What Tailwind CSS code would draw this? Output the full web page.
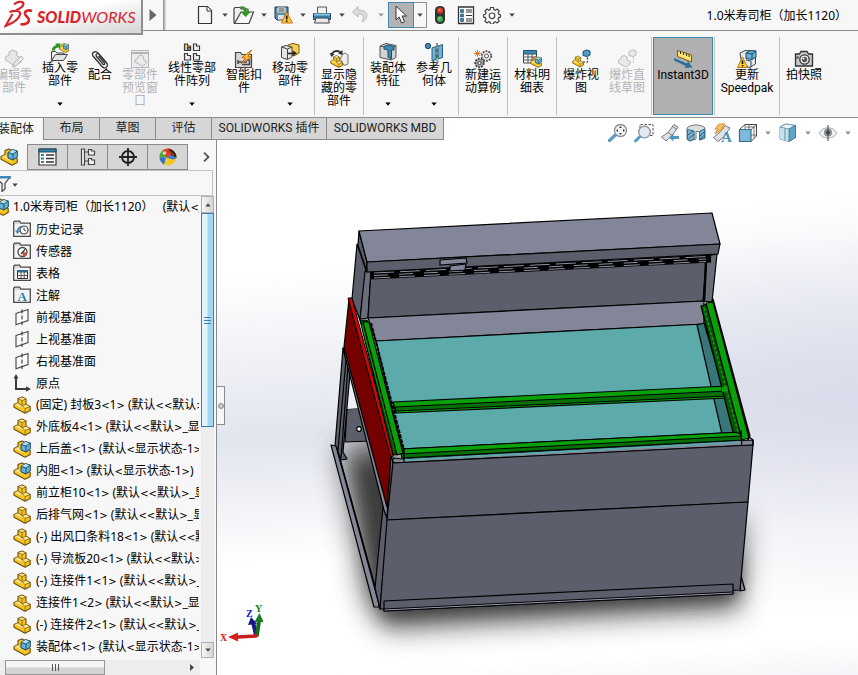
<!DOCTYPE html>
<html lang="zh-CN">
<head>
<meta charset="utf-8">
<title>SOLIDWORKS - 1.0米寿司柜（加长1120）</title>
<script src="https://cdn.jsdelivr.net/npm/@tailwindcss/browser@4"></script>
</head>
<body class="flex h-screen flex-col overflow-hidden bg-[#f7f7f7] font-['Roboto','Noto_Sans_CJK_SC',sans-serif] text-[12px] leading-[13px] text-black">

<svg class="hidden" aria-hidden="true">
  <defs>
    <linearGradient id="gGrey" x1="0" y1="0" x2="1" y2="1"><stop offset="0" stop-color="#fff"/><stop offset="1" stop-color="#b5b5b5"/></linearGradient>
    <symbol id="caret" viewBox="0 0 6 4"><path d="M0.3 0.5h5.4L3 3.8z" fill="currentColor"/></symbol>
    <symbol id="part" viewBox="0 0 18 18">
      <path d="M1 8.500 5 6.800V2.500L9 .9l4 2v5.400l4.200 2.200v4L12 17.200 1 11.300z" fill="#f6c520" stroke="#6b5010" stroke-width="1.100" stroke-linejoin="round"/>
      <path d="M5.500 2.600 9 1.400l3.500 1.600L9 4.400zM9.500 9.600 13 8.500l3.600 2-4.600 1.900zM1.500 8.600 5 7.300l3.800 2.300 2.700 3z" fill="#fbe58c"/>
      <path d="M5 2.500l4 2.100v5l3 3v4.600M9 4.600 13 2.900M5 6.800l4 2.800 4-1.300M12 12.600l5-2.100" fill="none" stroke="#6b5010" stroke-width=".7"/>
    </symbol>
    <symbol id="asm" viewBox="0 0 18 18">
      <path d="M1 8.500 5 6.500V2.500L9 .9l4 2v5.400l4.200 2.200v4L12 17.200 1 11.300z" fill="#f6c520" stroke="#6b5010" stroke-width="1.100" stroke-linejoin="round"/>
      <path d="M1.500 8.600 5 7.300l4 4 3 2.200z" fill="#fbe58c"/>
      <path d="M8 4.500 12.500 1.500 17.300 3v6L13 12 8 10z" fill="#69b0d6" stroke="#1c4b66" stroke-width="1" stroke-linejoin="round"/>
      <path d="M8.500 4.300 12.500 2l4 1.200L13 5.600z" fill="#b5dcf0"/>
      <path d="M8 4.500l5 1.700V12M13 6.200 17.300 3" fill="none" stroke="#1c4b66" stroke-width=".9"/>
    </symbol>
    <symbol id="folder" viewBox="0 0 18 18"><path d="M.7 16.300V2.200l1-1h5l1 2h9.600v13.100z" fill="#f4f4f4" stroke="#4a4a4a" stroke-width="1.300"/><path d="M1.500 3h5" stroke="#bbb"/></symbol>
    <symbol id="history" viewBox="0 0 18 18"><use href="#folder"/><circle cx="11" cy="10" r="4" fill="#fff" stroke="#444" stroke-width="1.200"/><path d="M11 7.500V10l2 1" fill="none" stroke="#444"/><path d="M4.500 12c0-4 2.500-5.500 5-5" fill="none" stroke="#3c86ad" stroke-width="1.600"/><path d="M2 10.500h5.500L4.500 14z" fill="#3c86ad"/></symbol>
    <symbol id="sensor" viewBox="0 0 18 18"><use href="#folder"/><circle cx="9.500" cy="10" r="4.500" fill="#fff" stroke="#444" stroke-width="1.300"/><path d="M9.500 10 14 10.500A4.500 4.500 0 0 1 10 14.500z" fill="#e2492b"/><path d="M8 12l4-4.500" stroke="#333" stroke-width="1.300"/></symbol>
    <symbol id="table" viewBox="0 0 18 18"><use href="#folder"/><path d="M4.500 6.500h10v8h-10z" fill="#fff" stroke="#333"/><path d="M4.500 6h10v2.500h-10z" fill="#2d6c8e"/><path d="M4.500 11.500h10M8 8v6.500M11.200 8v6.500" stroke="#333" stroke-width=".8"/></symbol>
    <symbol id="note" viewBox="0 0 18 18"><use href="#folder"/><text x="4.500" y="15" font-family="Liberation Serif" font-weight="700" font-size="13" fill="#2f7ea8">A</text></symbol>
    <symbol id="plane" viewBox="0 0 18 18"><path d="M3 5.500 15 1.500v11L3 16.800z" fill="#fafafa" stroke="#444" stroke-width="1.100"/><path d="M9 1.500v15.500" stroke="#444" stroke-width="1.200" stroke-dasharray="4 2"/></symbol>
    <symbol id="origin" viewBox="0 0 18 18"><path d="M3 3v12h11" fill="none" stroke="#3c3c3c" stroke-width="2"/><path d="M.5 4.500 3 0l2.500 4.500zM13 12.200l5 2.800-5 2.800z" fill="#3c3c3c"/></symbol>
  </defs>
</svg>

<!-- Title and quick access bar -->
<header class="relative z-10 flex h-[31px] shrink-0 items-center border-b border-[#8a8a8a]">
  <div class="flex h-[35px] w-[143px] shrink-0 items-center self-start overflow-hidden border-r-2 border-b-2 border-[#8f8f8f] bg-linear-to-br from-white from-40% to-[#d5d5d5]">
    <svg class="ml-1 h-[28px] w-[29px] shrink-0 self-start" viewBox="0 0 29 28" fill="none" stroke="#d9242b"><path d="M10 4.500C13 1.800 17 1 19 2.500c1.500 2.500-1.500 5.500-6.500 7.500" stroke-width="2.200"/><path d="M5.500 12c5-1.500 11.500-2 10.500 2.500-1 5-8 9-14.500 11.500L8.500 14" stroke-width="2.200"/><path d="M28 11c-3.500-1.500-7.500 0-7 3 .5 2.500 4.500 3.500 4 6.500s-5 4.500-8.500 3.500" stroke-width="2.600"/></svg>
    <span class="ml-1 font-['Lato',sans-serif] text-[16px] leading-[20px] text-[#d9242b] italic"><b class="font-black">SOLID</b>WORKS</span>
  </div>
  <button class="flex w-[20px] shrink-0 justify-center" aria-label="展开菜单"><svg class="h-3 w-2" viewBox="0 0 8 12"><path d="M.5 0 7.500 6 .5 12z" fill="#666"/></svg></button>
  <div class="h-full w-[3px] shrink-0 bg-linear-to-r from-[#8a8a8a] to-[#e8e8e8]"></div>
  <nav class="ml-[26px] flex shrink-0 items-center text-[#444]">
    <button class="flex w-[26px] justify-center" aria-label="新建"><svg class="h-[20px] w-[20px]" viewBox="0 0 20 20"><path d="M3.500 1.500h9l4 4v13h-13z" fill="url(#gGrey)" stroke="#333" stroke-width="1.200"/><path d="M12 1.500v4.500h4.500" fill="#fff" stroke="#333"/></svg></button>
    <button class="flex w-[13px] justify-center" aria-label="新建选项"><svg class="h-1 w-1.5"><use href="#caret"/></svg></button>
    <button class="flex w-[26px] justify-center" aria-label="打开"><svg class="h-[20px] w-[22px]" viewBox="0 0 22 20"><path d="M1 18V4l1-1.500h5L8.500 4H15v3" fill="#eee" stroke="#444" stroke-width="1.200"/><path d="M1.500 18.500 8 7h12.500L16 18.500z" fill="url(#gGrey)" stroke="#444" stroke-width="1.200"/><path d="M6 2c5-2 8 .5 8 5h3.500L12.500 12 8 7h3C11 4 9 3 6 2z" fill="#2f9a1f"/></svg></button>
    <button class="flex w-[13px] justify-center" aria-label="打开选项"><svg class="h-1 w-1.5"><use href="#caret"/></svg></button>
    <button class="flex w-[26px] justify-center" aria-label="保存"><svg class="h-[20px] w-[20px]" viewBox="0 0 20 20"><path d="M2 2h13v13H4l-2-2z" fill="#5a8fae" stroke="#234"/><path d="M4.500 2.500h8v5h-8z" fill="#f3f3f3"/><path d="M5.500 4h6M5.500 6h6" stroke="#333"/><path d="M5 10h6v4.500H5z" fill="#dde"/><path d="M13.500 7 19.500 18h-11z" fill="#fbc72b" stroke="#c9761a"/><path d="M13.700 10.500v4M13.700 15.500v1.500" stroke="#111" stroke-width="1.600"/></svg></button>
    <button class="flex w-[13px] justify-center" aria-label="保存选项"><svg class="h-1 w-1.5"><use href="#caret"/></svg></button>
    <button class="flex w-[26px] justify-center" aria-label="打印"><svg class="h-[20px] w-[20px]" viewBox="0 0 20 20"><path d="M5.500 9V2h9v7" fill="#f3f3f3" stroke="#555"/><path d="M1.500 8.500h17v6h-17z" fill="#357fa8" stroke="#1d4660"/><path d="M2 8.500h16v2H2z" fill="#90c6e0"/><path d="M4 13h12l1.500 5h-15z" fill="#e9e9e9" stroke="#444"/></svg></button>
    <button class="flex w-[13px] justify-center" aria-label="打印选项"><svg class="h-1 w-1.5"><use href="#caret"/></svg></button>
    <button class="flex w-[26px] justify-center" aria-label="撤销" disabled><svg class="h-[20px] w-[20px]" viewBox="0 0 20 20"><path d="M7 1.500 1.500 7 7 12V9c5 0 7 2 4 8 7-4 7.500-12-4-12z" fill="#dcdcdc" stroke="#bbb"/></svg></button>
    <button class="flex w-[13px] justify-center text-[#999]" aria-label="撤销选项"><svg class="h-1 w-1.5"><use href="#caret"/></svg></button>
    <button class="ml-px flex h-[26px] w-[26px] items-center justify-center border border-[#3c87b5] bg-[#b3b3b3]" aria-label="选择"><svg class="h-[20px] w-[16px]" viewBox="0 0 16 20"><path d="M3 1v14l3.200-3 2.300 6 3-1.200-2.300-5.800h4.300z" fill="#fff" stroke="#333"/></svg></button>
    <button class="flex h-[26px] w-[13px] items-center justify-center border border-l-0 border-[#8f8f8f]" aria-label="选择选项"><svg class="h-1 w-1.5"><use href="#caret"/></svg></button>
    <button class="flex w-[26px] justify-center" aria-label="重建"><svg class="h-[20px] w-[12px]" viewBox="0 0 12 20"><rect x="1" y="1" width="10" height="18" rx="4.500" fill="#333"/><circle cx="6" cy="5.500" r="3" fill="#e13b26"/><circle cx="6" cy="14" r="3" fill="#3bae49"/><circle cx="5.500" cy="5" r="1" fill="#f89a8a"/><circle cx="5.500" cy="13.500" r="1" fill="#93dba0"/></svg></button>
    <button class="flex w-[26px] justify-center" aria-label="文件属性"><svg class="h-[20px] w-[18px]" viewBox="0 0 18 20"><path d="M1.500 2h15v16.500h-15z" fill="#fff" stroke="#333" stroke-width="1.300"/><path d="M3.500 4.500h3v3h-3zM3.500 9h3v3h-3zM3.500 13.500h3v3h-3z" fill="#357fa8" stroke="#1d4660" stroke-width=".6"/><path d="M9 5h6M9 7h6M9 10.500h6M9 14h6M9 16h6" stroke="#333"/></svg></button>
    <button class="flex w-[26px] justify-center" aria-label="选项"><svg class="h-[18px] w-[18px]" viewBox="0 0 18 18" fill="none" stroke="#444" stroke-width="1.200"><path d="M7.500 1.500h3l.4 2 1.500.7 1.800-1.100 2 2-1.100 1.800.6 1.400 1.800.5v2.400l-1.900.4-.6 1.500 1.200 1.800-2 2-1.800-1.200-1.500.7-.5 1.800h-2.800l-.4-1.900-1.500-.6L3.900 17l-2-2.100L3 13.100l-.6-1.500-1.900-.4V8.700l1.900-.4.7-1.400L2 5.100 4 3.100l1.700 1.100 1.500-.7z"/><circle cx="9" cy="9.800" r="2.800"/></svg></button>
    <button class="flex w-[13px] justify-center" aria-label="选项菜单"><svg class="h-1 w-1.5"><use href="#caret"/></svg></button>
  </nav>
  <h1 class="ml-auto pr-[11px] font-['Noto_Sans','Noto_Sans_CJK_SC',sans-serif] text-[12px] whitespace-nowrap">1.0米寿司柜（加长1120）</h1>
</header>

<!-- Ribbon -->
<section class="flex h-[87px] shrink-0 border-b border-[#8a8a8a] pt-[6px] pb-[2px] text-center whitespace-nowrap" aria-label="命令">
  <button class="-ml-[9px] flex w-[46px] shrink-0 flex-col items-center pt-[12px] text-[#b4b4b4]" disabled><svg class="h-[20px] w-[20px]" viewBox="0 0 20 20" fill="#e6e6e6" stroke="#b4b4b4"><path d="M1.500 8 5 6V3l4-2 4 2v4l4 2v4l-6 4-9.500-6z"/><path d="M17 7 10 14l-1.500 4 4-1.500 7-7z"/></svg><span>编辑零<br>部件</span></button>
  <button class="flex w-[46px] shrink-0 flex-col items-center pt-[5px]"><svg class="h-[20px] w-[20px]" viewBox="0 0 20 20"><path d="M1.500 18V9.500h4L7 11h7v2" fill="#eee" stroke="#444"/><path d="M1.500 18.500 5.500 12.500h12l-4 6z" fill="#e4e4e4" stroke="#444"/><path d="M2 8.500C2 5 4 3.500 6 3.500L5.500 1.500h5v5L8.500 5.500C6 5.500 5 6.500 5 8.500z" fill="#2f9a1f"/><svg x="9" y="1" width="10" height="10"><use href="#asm"/></svg></svg><span>插入零<br>部件</span><svg class="mt-[14px] h-1 w-1.5"><use href="#caret"/></svg></button>
  <button class="flex w-[34px] shrink-0 flex-col items-center pt-[12px]"><svg class="h-[20px] w-[20px]" viewBox="0 0 20 20" fill="none" stroke="#333" stroke-width="1.300"><path d="M15.500 13 8 4C5.500 1 1 3.500 3 7l9 10.500c2.500 3 7 0 4.700-3.500L9.500 5.500C7.500 3.500 5 5.500 6.500 7.500l6.500 7.700c1 1 2.300 0 1.500-1L8.500 7"/></svg><span>配合</span></button>
  <button class="flex w-[46px] shrink-0 flex-col items-center pt-[12px] text-[#b4b4b4]" disabled><svg class="h-[20px] w-[20px]" viewBox="0 0 20 20" fill="#ececec" stroke="#b4b4b4"><path d="M1.500 1.500h17v17h-17z"/><path d="M1.500 4h17" stroke-width="2"/><path d="M5 11l3-1.500v-2l3-1.500 2.500 1.500v3l2.500 1.500v2.500L12.500 17 5 13z"/></svg><span>零部件<br>预览窗<br>口</span></button>
  <button class="flex w-[58px] shrink-0 flex-col items-center pt-[5px]"><svg class="h-[20px] w-[18px]" viewBox="0 0 18 20" fill="#eee" stroke="#3a3a3a" stroke-width="1.200"><path d="M1.500 2h3v2h3v4.500h-6z" fill="#f8d75b"/><path d="M4.500 5.500h3v3h-3z" fill="#4a9cc4"/><path d="M10.500 2h3v2h3v4.500h-6zM1.500 11.500h3v2h3V18h-6zM10.500 11.500h3v2h3V18h-6z"/></svg><span>线性零部<br>件阵列</span><svg class="mt-[14px] h-1 w-1.5"><use href="#caret"/></svg></button>
  <button class="flex w-[46px] shrink-0 flex-col items-center pt-[12px]"><svg class="h-[20px] w-[20px]" viewBox="0 0 20 20"><path d="M1.500 18.500v-15h5L8 5.500h9.500v13z" fill="#d5d5d5" stroke="#444" stroke-width="1.200"/><path d="M4 13h9M4 11v4M13 11h2.500v4.500H8" stroke="#444" stroke-width="1.500" fill="none"/><path d="M17.500 1 8 8.500l3.500.5L7 14.500 17.500 8l-3.500-.7z" fill="#f9c52b" stroke="#c55a11" stroke-width=".9"/></svg><span>智能扣<br>件</span></button>
  <button class="flex w-[46px] shrink-0 flex-col items-center pt-[5px]"><svg class="h-[20px] w-[20px]" viewBox="0 0 20 20"><path d="M8 3l5-1.500 6 1.500v8l-5 3-6-2z" fill="#f6cf4e" stroke="#7a5a10"/><path d="M1.500 5 6 3.500l6 1.500v10l-4.500 2.500-6-2z" fill="#e6e6e6" stroke="#444"/><path d="M1.500 5l6 2V17.500M7.500 7 12 5" fill="none" stroke="#444"/><path d="M8 11.500h5" stroke="#222" stroke-width="1.600"/><path d="M12.500 8.500l4.500 2.500-4 3z" fill="#222"/></svg><span>移动零<br>部件</span><svg class="mt-[14px] h-1 w-1.5"><use href="#caret"/></svg></button>
  <div class="mx-px w-px shrink-0 bg-[#c4c4c4]"></div>
  <button class="flex w-[46px] shrink-0 flex-col items-center pt-[12px]"><svg class="h-[20px] w-[20px]" viewBox="0 0 20 20"><path d="M11 9l2-1.500V5.500L16 4l3 2v9l-4 1.500z" fill="#eee" stroke="#777"/><svg x="1" y="6" width="13" height="13"><use href="#part"/></svg><path d="M2.500 6C4 1.500 9 1 11.500 3.500" fill="none" stroke="#333" stroke-width="1.800"/><path d="M9 4.500 13.500 6V1zM.5 4l2 4 3-3z" fill="#333"/></svg><span>显示隐<br>藏的零<br>部件</span></button>
  <div class="mx-px w-px shrink-0 bg-[#c4c4c4]"></div>
  <button class="flex w-[46px] shrink-0 flex-col items-center pt-[5px]"><svg class="h-[20px] w-[20px]" viewBox="0 0 20 20"><path d="M2 4 8 1.500 18 3.500v12L13 18 2 15.500z" fill="#d2d2d2" stroke="#555"/><path d="M2 4l11 2.500V18M13 6.500 18 3.500" fill="none" stroke="#555"/><path d="M6 4.500 10 3l6 1.500V8h-2.500v8.500L10 15.500V8L6 7z" fill="#3d8ab5" stroke="#1c4b66"/></svg><span>装配体<br>特征</span><svg class="mt-[14px] h-1 w-1.5"><use href="#caret"/></svg></button>
  <button class="flex w-[46px] shrink-0 flex-col items-center pt-[5px]"><svg class="h-[20px] w-[20px]" viewBox="0 0 20 20"><circle cx="4" cy="4" r="2.700" fill="#3d8ab5" stroke="#1c4b66"/><path d="M8 6l4-1.500v13L8 19zM14 4l4.500-1.500v13L14 17z" fill="#6fb2d6" stroke="#24607f"/><path d="M13 1v18.500" stroke="#222" stroke-dasharray="4 1.500"/></svg><span>参考几<br>何体</span><svg class="mt-[14px] h-1 w-1.5"><use href="#caret"/></svg></button>
  <div class="mx-px w-px shrink-0 bg-[#c4c4c4]"></div>
  <button class="flex w-[46px] shrink-0 flex-col items-center pt-[12px]"><svg class="h-[20px] w-[20px]" viewBox="0 0 20 20"><circle cx="13.500" cy="7" r="4.800" fill="#eee" stroke="#555" stroke-width="1.800" stroke-dasharray="2 1"/><circle cx="13.500" cy="7" r="2" fill="#fff" stroke="#555"/><circle cx="6.500" cy="14" r="4.300" fill="#aaa" stroke="#444" stroke-width="1.800" stroke-dasharray="2 1"/><circle cx="6.500" cy="14" r="1.600" fill="#fff" stroke="#444"/><path d="M4.500 1v7M1 4.500h7M2 2l5 5M7 2 2 7" stroke="#d9772a"/></svg><span>新建运<br>动算例</span></button>
  <div class="mx-px w-px shrink-0 bg-[#c4c4c4]"></div>
  <button class="flex w-[46px] shrink-0 flex-col items-center pt-[12px]"><svg class="h-[20px] w-[20px]" viewBox="0 0 20 20"><path d="M1.500 2h13v12h-13z" fill="#fff" stroke="#444"/><path d="M1.500 1.500h13V5h-13z" fill="#3d8ab5" stroke="#24506a"/><path d="M1.500 8h13M1.500 11h13M6 5v9M10 5v9" stroke="#555"/><svg x="8" y="7" width="12" height="12"><use href="#asm"/></svg></svg><span>材料明<br>细表</span></button>
  <div class="mx-px w-px shrink-0 bg-[#c4c4c4]"></div>
  <button class="flex w-[46px] shrink-0 flex-col items-center pt-[12px]"><svg class="h-[20px] w-[20px]" viewBox="0 0 20 20"><path d="M12 2.500 15.500 1 19 2v4l-3 1.500-4-1z" fill="#4f9fca" stroke="#1c4b66"/><path d="M12 13h4.500V8" fill="none" stroke="#333" stroke-width="1.200" stroke-dasharray="2 1.500"/><svg x="1" y="6" width="12" height="13"><use href="#part"/></svg></svg><span>爆炸视<br>图</span></button>
  <button class="flex w-[46px] shrink-0 flex-col items-center pt-[12px] text-[#b4b4b4]" disabled><svg class="h-[20px] w-[20px]" viewBox="0 0 20 20" fill="#e9e9e9" stroke="#b9b9b9"><path d="M12 2.500 15.500 1 19 2v4l-3 1.500-4-1z"/><path d="M12 13h4.500V8" fill="none" stroke-dasharray="2 1.500"/><path d="M1.500 11.500 4 10V8l3-1.500L10 8v3l3 1.500V15L9 18l-7.500-4z"/></svg><span>爆炸直<br>线草图</span></button>
  <div class="mx-px w-px shrink-0 bg-[#c4c4c4]"></div>
  <button class="flex w-[60px] shrink-0 flex-col items-center border border-[#3c87b5] bg-[#b0b0b0] pt-[11px]" aria-pressed="true"><svg class="h-[20px] w-[20px]" viewBox="0 0 20 20"><path d="M4.500 1.500 18.500 6v7L4.500 7.500z" fill="#fbe36b" stroke="#6e5a14"/><path d="M7.500 2.500v2.500M10.500 3.500v2.500M13.500 4.500V7M16 5.500V8" stroke="#333"/><path d="M1 9l13 5.500 1-2.500 4.500 6.500-8 .5 1.300-2L1 11.500z" fill="#2d6f9a"/></svg><span>Instant3D</span></button>
  <div class="mx-px w-px shrink-0 bg-[#c4c4c4]"></div>
  <button class="flex w-[62px] shrink-0 flex-col items-center pt-[12px]"><svg class="h-[20px] w-[20px]" viewBox="0 0 20 20"><path d="M3 4 8 1.500 18.500 2v13L13 18.500 5 16z" fill="#e7e7e7" stroke="#444"/><path d="M9 4l4-2.500 6 .5v6l-4 2.500-6-1z" fill="#6bb1d7" stroke="#1c4b66"/><path d="M9 4l6 1v5.500M15 5l4-3M9 11l5 1v6" fill="none" stroke="#1c4b66"/><path d="M5.500 8 10.500 18.500H.5z" fill="#fbd52b" stroke="#b5761a"/><path d="M5.500 11.500v3.500M5.500 16v1.500" stroke="#111" stroke-width="1.600"/></svg><span>更新<br>Speedpak</span></button>
  <div class="mx-px w-px shrink-0 bg-[#c4c4c4]"></div>
  <button class="flex w-[46px] shrink-0 flex-col items-center pt-[12px]"><svg class="h-[20px] w-[20px]" viewBox="0 0 20 20"><path d="M1.500 5h4L7 2.500h6L14.500 5h4v12h-17z" fill="#c8c8c8" stroke="#333" stroke-width="1.300"/><circle cx="10.500" cy="10.500" r="4.700" fill="#eee" stroke="#333" stroke-width="1.300"/><circle cx="10.500" cy="10.500" r="2.700" fill="#555"/><circle cx="9.500" cy="9.500" r="1" fill="#fff"/><path d="M2.500 7.500h2v2h-2z" fill="#333"/></svg><span>拍快照</span></button>
</section>

<!-- Work area -->
<main class="flex min-h-0 flex-1 flex-col bg-[radial-gradient(ellipse_45%_38%_at_100%_52%,rgba(214,216,232,0.75),rgba(214,216,232,0)),linear-gradient(176deg,#ffffff_28%,#e1e5ee_55%,#eceef4_62%,#ffffff_75%,#ffffff_94%,#f5f5f9_100%)]">
  <div class="flex h-[22px] shrink-0 items-start justify-between">
    <div class="flex h-full shrink-0 text-[#222]" role="tablist">
      <button role="tab" aria-selected="true" class="w-[43px] shrink-0 overflow-hidden bg-[#f7f7f7] pr-[9px]"><span class="flex justify-end whitespace-nowrap">装配体</span></button>
      <button role="tab" class="w-[57px] border border-t-0 border-[#8a8a8a] bg-[#d6d6d6]">布局</button>
      <button role="tab" class="w-[56px] border-r border-b border-[#8a8a8a] bg-[#d6d6d6]">草图</button>
      <button role="tab" class="w-[56px] border-r border-b border-[#8a8a8a] bg-[#d6d6d6]">评估</button>
      <button role="tab" class="w-[115px] border-r border-b border-[#8a8a8a] bg-[#d6d6d6]">SOLIDWORKS 插件</button>
      <button role="tab" class="w-[117px] border-r border-b border-[#8a8a8a] bg-[#d6d6d6]">SOLIDWORKS MBD</button>
    </div>
    <div class="flex shrink-0 items-center pt-[5px] pr-[3px] text-[#888]" role="toolbar" aria-label="视图">
      <button class="flex w-[26px] justify-center" aria-label="整屏显示全图"><svg class="h-[20px] w-[20px]" viewBox="0 0 20 20"><path d="M1.500 17.500 8 11.500" stroke="#5b9cc0" stroke-width="3.200" stroke-linecap="round"/><circle cx="12.500" cy="7.500" r="6" fill="#f2f5f8" stroke="#8a8f94" stroke-width="1.300"/><path d="M12.500 3l1.500 2h-3zM12.500 12l1.500-2h-3zM8 7.500 10 6v3zM17 7.500 15 6v3z" fill="#444"/></svg></button>
      <button class="flex w-[26px] justify-center" aria-label="局部放大"><svg class="h-[20px] w-[20px]" viewBox="0 0 20 20"><path d="M6 5V1.500h13v11h-4" fill="none" stroke="#555" stroke-dasharray="2.500 1.500"/><path d="M1.500 18 6 13.500" stroke="#5b9cc0" stroke-width="3" stroke-linecap="round"/><circle cx="10.500" cy="9" r="5.800" fill="#e3ebf2" stroke="#8a8f94" stroke-width="1.300"/></svg></button>
      <button class="flex w-[26px] justify-center" aria-label="上一视图"><svg class="h-[20px] w-[20px]" viewBox="0 0 20 20"><path d="M1.500 14 8 9.500l6-8 4 2.500-5.500 8L6 18z" fill="#dfe2e4" stroke="#777"/><path d="M8 9.500l4.500 3M12.500 3.500l4 2.500" stroke="#777"/><path d="M9 14.500l4.500-4v2.500H19v3h-5.500v2.500z" fill="#4f97bd"/></svg></button>
      <button class="flex w-[26px] justify-center" aria-label="剖面视图"><svg class="h-[20px] w-[20px]" viewBox="0 0 20 20"><path d="M1 5c3-4 15-4 18 0v10l-5 2V8.500h-4V16l-6 2-3-1.500z" fill="#d9dde0" stroke="#777"/><path d="M1.500 6.500 8 8v8l-4 2-2.500-1.500zM13.500 8.500 18.500 6v9l-5 2z" fill="#7bb5d3" stroke="#35708f"/><path d="M2 12l5-4M2.500 16 8 11M14 13l4-4M14 16l4-3.500" stroke="#245a78"/></svg></button>
      <button class="flex w-[26px] justify-center" aria-label="动态注解视图"><svg class="h-[20px] w-[20px]" viewBox="0 0 20 20"><path d="M1.500 14.500 7 10l6-7.500 5 2.500-6 8.500L6 18.500z" fill="#dfe2e4" stroke="#777"/><path d="M7 1h6L9.500 5H12L3 11l3-5H3z" fill="#f9c25a" stroke="#c97c28" stroke-width=".8"/><text x="9" y="19" font-family="Liberation Serif" font-size="15" font-weight="700" fill="#4b93ba">A</text></svg></button>
      <button class="flex w-[26px] justify-center" aria-label="视图定向"><svg class="h-[20px] w-[20px]" viewBox="0 0 20 20"><path d="M1.500 6.500 7 1.500h11.500V13L13 18.500" fill="#fff" stroke="#444"/><path d="M7 1.500v5M13 6.500l5.500-5M11 1.500v5M8 4h9M16 4v11M13 12h5.500" stroke="#555" stroke-width=".8" fill="none"/><path d="M1.500 6.500H13v12H1.500z" fill="#7fbadb" stroke="#336e90" stroke-width="1.200"/></svg></button>
      <button class="flex w-[14px] justify-center" aria-label="视图定向选项"><svg class="h-1 w-1.5"><use href="#caret"/></svg></button>
      <button class="flex w-[26px] justify-center" aria-label="显示样式"><svg class="h-[20px] w-[20px]" viewBox="0 0 20 20"><path d="M2 4 8 1l9.500 1.500v12L11 18.500 2 16z" fill="#a3d0e8" stroke="#6b8ea1"/><path d="M2 4l9 2v12.500L2 16z" fill="#c5e2f0"/><path d="M2 4 8 1l9.500 1.500L11 6z" fill="#e9f4fa" stroke="#6b8ea1" stroke-width=".8"/><path d="M11 6l6.500-3.500v12L11 18.500z" fill="#5fa5c9" stroke="#3a6e8a" stroke-width=".8"/><path d="M7 5v12.500" stroke="#7aa" stroke-width="1.400"/></svg></button>
      <button class="flex w-[14px] justify-center" aria-label="显示样式选项"><svg class="h-1 w-1.5"><use href="#caret"/></svg></button>
      <button class="flex w-[26px] justify-center" aria-label="隐藏/显示项目"><svg class="h-[20px] w-[20px]" viewBox="0 0 20 20"><path d="M1 10c4-7 14-7 18 0-4 7-14 7-18 0z" fill="#eceef0" stroke="#b0b2b5"/><circle cx="10" cy="9.500" r="4" fill="#8b9094"/><circle cx="10" cy="9.500" r="2" fill="#444"/><path d="M10 2v16" stroke="#444"/></svg></button>
      <button class="flex w-[14px] justify-center" aria-label="隐藏选项"><svg class="h-1 w-1.5"><use href="#caret"/></svg></button>
    </div>
  </div>

  <div class="flex min-h-0 flex-1">
    <!-- Feature manager -->
    <aside class="flex w-[217px] shrink-0 flex-col overflow-hidden border-r border-[#8a8a8a] bg-[#f7f7f7]">
      <div class="flex h-[30px] shrink-0 items-end pt-1">
        <button class="flex h-full w-[27px] shrink-0 items-center" aria-label="设计树"><svg class="h-[18px] w-[18px]"><use href="#asm"/></svg></button>
        <button class="flex h-full w-[41px] items-center justify-center border border-[#8a8a8a] bg-[#d6d6d6]" aria-label="属性管理器"><svg class="h-[18px] w-[19px]" viewBox="0 0 19 18"><path d="M1 1h17v16H1z" fill="#fff" stroke="#333" stroke-width="1.200"/><path d="M1 1h17v3H1z" fill="#357fa8" stroke="#1d4660"/><path d="M3 6h3v2H3zM3 9.500h3v2H3zM3 13h3v2H3z" fill="#357fa8"/><path d="M8 7h8M8 10.500h8M8 14h8" stroke="#333" stroke-width="1.300"/></svg></button>
        <button class="flex h-full w-[40px] items-center justify-center border border-l-0 border-[#8a8a8a] bg-[#d6d6d6]" aria-label="配置管理器"><svg class="h-[18px] w-[16px]" viewBox="0 0 16 18" fill="#f4f4f4" stroke="#444" stroke-width="1.200"><path d="M1.500 1h3v16h-3zM4.500 4h4M4.500 13h4"/><path d="M8.500 1.500h3V3h3v4h-6zM8.500 10.500h3V12h3v4.500h-6z"/></svg></button>
        <button class="flex h-full w-[40px] items-center justify-center border border-l-0 border-[#8a8a8a] bg-[#d6d6d6]" aria-label="尺寸管理器"><svg class="h-[18px] w-[18px]" viewBox="0 0 18 18" fill="none" stroke="#222" stroke-width="1.800"><circle cx="9" cy="9" r="6"/><path d="M9 0v18M0 9h18"/></svg></button>
        <button class="flex h-full w-[40px] items-center justify-center border border-l-0 border-[#8a8a8a] bg-[#d6d6d6]" aria-label="外观管理器"><svg class="h-[18px] w-[18px]" viewBox="0 0 18 18"><circle cx="9" cy="9" r="8.500" fill="#f2c82b"/><path d="M3.500 2.500A8.500 8.500 0 0 0 .5 9.500L7 9.500z" fill="#3fae3f"/><path d="M3.500 2.500A8.500 8.500 0 0 1 10 .5L12 7 7 9.500z" fill="#e23a25"/><path d="M.5 9.500 7 9.500 5 16.500c-2.500-1.500-4.500-4-4.500-7z" fill="#2f6fd0"/><path d="M7 9.500l5-2.500 5.500 3.500-4 1z" fill="#3a7bd0"/><path d="M9.500.7c4 .3 7 3 8 7.300v2L12 7z" fill="#2a2020"/><path d="M11 3.500l4 4" stroke="#c9301f" stroke-width="1.400"/><circle cx="5.500" cy="5" r="1.800" fill="#fff" opacity=".7"/></svg></button>
        <button class="flex h-full flex-1 items-center justify-center pl-2" aria-label="更多"><svg class="h-[10px] w-[7px]" viewBox="0 0 7 10" fill="none" stroke="#555" stroke-width="1.800"><path d="M1 .7 5.500 5 1 9.300"/></svg></button>
      </div>
      <div class="mr-[3px] flex h-[26px] shrink-0 items-center border border-l-0 border-[#c2c2c2] text-[#444]">
        <svg class="h-[17px] w-[11px] shrink-0" viewBox="0 0 11 17"><path d="M-6 2h16L5 8.500V14l-3 2.500V8.500z" fill="#f0f0f0" stroke="#444" stroke-width="1.200"/><path d="M-6 1h17v2.500H-6z" fill="#3d8ab5"/></svg>
        <svg class="mt-1 ml-[1px] h-1 w-1.5 shrink-0"><use href="#caret"/></svg>
        <input class="h-full min-w-0 flex-1 bg-transparent px-1 outline-none" aria-label="过滤">
      </div>
      <div class="flex min-h-0 flex-1">
        <ul id="tree" class="mr-[2px] min-w-0 flex-1 overflow-hidden font-['Noto_Sans','Noto_Sans_CJK_SC',sans-serif] whitespace-nowrap"></ul>
        <div class="mr-[2px] flex w-[13px] shrink-0 flex-col bg-[#ededed]">
          <button class="flex h-[17px] shrink-0 items-center justify-center border border-[#b0b0b0] bg-linear-to-r from-[#f6f6f6] to-[#d4d4d4] text-[#444]" aria-label="向上"><svg class="h-1 w-1.5 rotate-180"><use href="#caret"/></svg></button>
          <div class="flex h-[214px] shrink-0 flex-col items-center justify-center gap-[2px] border border-[#3c7fb1] bg-linear-to-r from-[#e3f4fc] from-45% to-[#a4d7f0] to-55%">
            <i class="h-px w-[7px] bg-[#3c7fb1]"></i><i class="h-px w-[7px] bg-[#3c7fb1]"></i><i class="h-px w-[7px] bg-[#3c7fb1]"></i>
          </div>
          <button class="mt-auto flex h-[16px] shrink-0 items-center justify-center border border-[#b0b0b0] bg-linear-to-r from-[#f6f6f6] to-[#d4d4d4] text-[#444]" aria-label="向下"><svg class="h-1 w-1.5"><use href="#caret"/></svg></button>
        </div>
      </div>
      <div class="mt-[2px] mr-[16px] flex h-[15px] shrink-0 items-center justify-between bg-[#ededed] pl-[5px]">
        <div class="flex h-full w-[100px] items-center justify-center gap-[2px] border border-[#979797] bg-linear-to-b from-[#f5f5f5] from-45% to-[#d4d4d4] to-55%"><i class="h-[7px] w-px bg-[#555]"></i><i class="h-[7px] w-px bg-[#555]"></i><i class="h-[7px] w-px bg-[#555]"></i></div>
        <button class="mr-[6px] text-[#444]" aria-label="向右"><svg class="h-[7px] w-[4px]" viewBox="0 0 4 7"><path d="M0 0 4 3.500 0 7z" fill="currentColor"/></svg></button>
      </div>
    </aside>

    <!-- Model canvas -->
    <section class="relative min-w-0 flex-1 overflow-hidden" aria-label="图形区域">
      <svg class="block h-full w-full" viewBox="217 140 641 535" preserveAspectRatio="xMinYMin slice" stroke-linejoin="round">
        <defs>
          <filter id="soft" x="-30%" y="-30%" width="160%" height="160%"><feGaussianBlur stdDeviation="14"/></filter>
          <filter id="soft2" x="-30%" y="-30%" width="160%" height="160%"><feGaussianBlur stdDeviation="9"/></filter>
        </defs>
        <path d="M338 448 395 430 395 500 745 520 740 610 385 630 365 600z" fill="#555" opacity=".85" filter="url(#soft)"/>
        <path d="M356 462 400 462 740 560 735 598 386 618 372 580z" fill="#333" opacity=".85" filter="url(#soft2)"/>
        <g stroke="#000" stroke-width="1.200">
          <!-- lower left frame -->
          <path d="M347 409 363 408 372 441 345 442z" fill="#5c5f6b"/>
          <path d="M348 372 362 408 347 409z" fill="#eef0f5" stroke="none"/>
          <circle cx="359" cy="429" r="2.300" fill="#fff"/>
          <path d="M343 348 350 374 343 452 347 459 341 460 335 446z" fill="#5c5f6b"/>
          <path d="M346 360 338 450M348 366 341 458" fill="none"/>
          <path d="M331 445 336 446 379 604 379 607 374 607z" fill="#84869a"/>
          <path d="M337 448 378 598M339 455 376 590" fill="none"/>
          <path d="M383 507 388 520 380 609 375 588z" fill="#5c5f6b"/>
          <path d="M343 348 346 352 388 500 387 518 384 510z" fill="#84869a"/>
          <!-- rear hood -->
          <path d="M357 244 366 270 360 320 352 299z" fill="#5c5f6b"/>
          <path d="M365 271 371 272 368 318 360 319z" fill="#6a6d7a"/>
          <path d="M371 272 707 256 704 301 368 318z" fill="#5c5f6b"/>
          <path d="M707 256 717 254 712 302 703 301z" fill="#6a6d7a"/>
          <path d="M706 262 704 301" stroke-width="2.500"/>
          <path d="M371 275.500 711 258.500" stroke-width="8"/>
          <path d="M374 273 708 256.500" stroke="#8f90a4" stroke-width="1" stroke-dasharray="20 6"/>
          <path d="M374 275.500 706 259" stroke="#8f90a4" stroke-width="1" stroke-dasharray="14 11"/>
          <path d="M374 278 706 261.500" stroke="#8f90a4" stroke-width="1" stroke-dasharray="16 9"/>
          <path d="M359 231 367 262 367 272 358 245z" fill="#5c5f6b"/>
          <path d="M359 231 712 213 720 244 367 262z" fill="#838598"/>
          <path d="M367 262 720 244 718 254 367 272z" fill="#5c5f6b"/>
          <path d="M440 260 466 258 467 263 440 265z" fill="#838598"/>
          <path d="M450 266 466 264 465 270 450 271z" fill="#838598"/>
          <path d="M368 318 704 301 704 324 376 341z" fill="#838598"/>
          <!-- tub -->
          <path d="M376 341 704 324 742 442 404 460z" fill="#5daaaa"/>
          <path d="M697 325 704 323 736 432 722 434z" fill="#39767a"/>
          <!-- middle bar -->
          <path d="M393 402 727 386 728 398 396 413z" fill="#0aa00a"/>
          <path d="M395 407 727 391 728 396 396 411z" fill="#067006" stroke-width="1"/>
          <!-- front bar -->
          <path d="M400 449 742 432 743 440 402 458z" fill="#067006"/>
          <path d="M400 449 742 432 742 436 401 454z" fill="#0aa00a" stroke-width="1"/>
          <path d="M393 458 402 459 753 440 753 445 393 463z" fill="#838598"/>
          <path d="M404 459 740 441 741 443 404 461z" fill="#5daaaa" stroke="none"/>
          <!-- left side -->
          <path d="M349 299 391 456 387 507 344 347z" fill="#750000"/>
          <path d="M348 298 352 298 394 455 391 458z" fill="#c80808" stroke-width="1"/>
          <path d="M360 320 367 320 404 453 393 455z" fill="#045504"/>
          <path d="M362 325 395 450" stroke="#0aa00a" stroke-width="1"/>
          <path d="M363 322 369 322 403 453 397 455z" fill="#0aa00a"/>
          <path d="M371 323 404 450" stroke-width="2" stroke-dasharray="4 1"/>
          <path d="M404 448v17M391 456l2 7" fill="none"/>
          <!-- right side -->
          <path d="M713 299 750 436 748 440 711 304z" fill="#a00606"/>
          <path d="M701 306 707 304 742 434 733 432z" fill="#045504"/>
          <path d="M704 308 738 432" stroke="#0aa00a" stroke-width="1.500" stroke-dasharray="3 2"/>
          <path d="M706 303 713 302 749 438 742 440z" fill="#0aa00a"/>
          <path d="M722 387 727 386 728 391 722 392z" fill="#0aa00a" stroke="none"/>
          <path d="M749 437 753 440 753 445M741 430 742 448" fill="none"/>
          <!-- front panels -->
          <path d="M393 463 753 445 748 502 387 520z" fill="#5c5f6b"/>
          <path d="M741 576 745 590 740 591z" fill="#838598"/>
          <path d="M387 520 748 502 740 590 380 609z" fill="#5c5f6b"/>
          <path d="M384 601 733 584 733 594 384 611z" fill="#5c5f6b"/>
          <path d="M384 609 733 592 733 594 384 611z" fill="#9a9cb4" stroke-width="1"/>
        </g>
        <!-- orientation triad -->
        <g stroke-linecap="round">
          <path d="M256 635 253 622" stroke="#1a1a8c" stroke-width="4"/><path d="M251 617 257 624 248 625z" fill="#16168f"/>
          <path d="M257 635 259 621" stroke="#176b1d" stroke-width="4"/><path d="M259.500 613 263.500 622 254.500 622z" fill="#1b7a22"/>
          <path d="M256 636 238 637" stroke="#c81e1e" stroke-width="3.500"/><path d="M228 637 238 632.500 238 641.500z" fill="#d32020"/>
        </g>
        <g font-family="Liberation Serif" font-size="10" font-weight="700"><text x="220" y="641" fill="#e81010">X</text><text x="246" y="617" fill="#1414d8">Z</text><text x="255" y="612" fill="#12801a">Y</text></g>
      </svg>
      <button class="absolute top-[246px] left-0 flex h-[39px] w-[8px] items-center justify-center border border-l-0 border-[#8a8a8a] bg-[#f7f7f7]" aria-label="折叠面板"><i class="h-[6px] w-[6px] rounded-full border border-[#888] bg-[#ccc]"></i></button>
    </section>
  </div>
</main>

<script>
  const rows = [
    ['history', '历史记录'], ['sensor', '传感器'], ['table', '表格'], ['note', '注解'],
    ['plane', '前视基准面'], ['plane', '上视基准面'], ['plane', '右视基准面'], ['origin', '原点'],
    ['part', '(固定) 封板3<1> (默认<<默认>_显示状态-1>)'],
    ['part', '外底板4<1> (默认<<默认>_显示状态-1>)'],
    ['asm', '上后盖<1> (默认<显示状态-1>)'],
    ['asm', '内胆<1> (默认<显示状态-1>)'],
    ['part', '前立柜10<1> (默认<<默认>_显示状态-1>)'],
    ['part', '后排气网<1> (默认<<默认>_显示状态-1>)'],
    ['part', '(-) 出风口条料18<1> (默认<<默认>_显示状态-1>)'],
    ['part', '(-) 导流板20<1> (默认<<默认>_显示状态-1>)'],
    ['part', '(-) 连接件1<1> (默认<<默认>_显示状态-1>)'],
    ['part', '连接件1<2> (默认<<默认>_显示状态-1>)'],
    ['part', '(-) 连接件2<1> (默认<<默认>_显示状态-1>)'],
    ['asm', '装配体<1> (默认<显示状态-1>)'],
  ];
  // Angle brackets are set in a wider face than the rest of the label.
  const mark = s => s.replace(/[<>]+/g, m =>
    `<span class="font-['DejaVu_Sans',sans-serif] text-[10px]">${m.replace(/</g, '&lt;').replace(/>/g, '&gt;')}</span>`);
  document.getElementById('tree').innerHTML =
    `<li class="flex h-[22px] items-center"><svg class="-ml-[9px] h-[18px] w-[18px] shrink-0"><use href="#asm"/></svg><span class="ml-1">${mark('1.0米寿司柜（加长1120）\u00a0\u00a0\u00a0(默认<_显示状态-1>)')}</span></li>` +
    rows.map(([icon, text]) =>
      `<li class="flex h-[22px] items-center pl-[13px]"><svg class="h-[18px] w-[18px] shrink-0"><use href="#${icon}"/></svg><span class="ml-[5px]">${mark(text)}</span></li>`).join('');
</script>
</body>
</html>
